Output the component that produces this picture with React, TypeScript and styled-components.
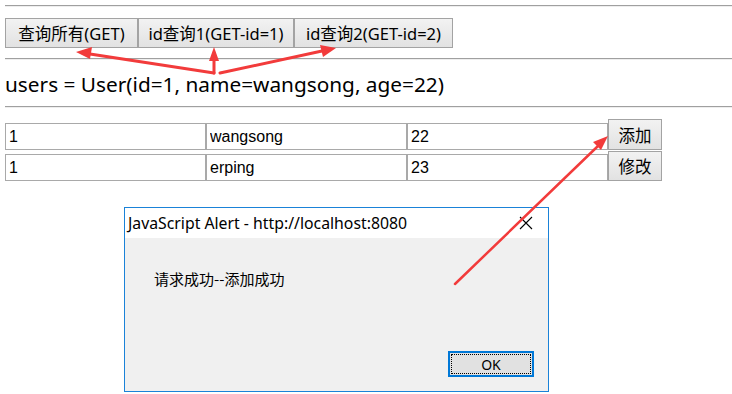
import styled, { createGlobalStyle } from "styled-components";

const GlobalStyle = createGlobalStyle`
  html, body {
    margin: 0;
    padding: 0;
    background: #ffffff;
  }
  body {
    font-family: "Noto Sans", "Noto Sans CJK SC", sans-serif;
    color: #000000;
  }
`;

const queryButtons = [
  { label: "查询所有(GET)", width: 133 },
  { label: "id查询1(GET-id=1)", width: 156 },
  { label: "id查询2(GET-id=2)", width: 159 },
];

const rows = [
  { id: "1", name: "wangsong", age: "22", action: "添加" },
  { id: "1", name: "erping", age: "23", action: "修改" },
];

function Arrows() {
  return (
    <Overlay width="732" height="394" viewBox="0 0 732 394">
      <g fill="#f23b3b" stroke="#f23b3b" strokeLinecap="round">
        <line x1="214" y1="73" x2="90" y2="54" strokeWidth="3" />
        <polygon points="76,52 92,47 90,59" stroke="none" />
        <line x1="214" y1="73" x2="214" y2="60" strokeWidth="3" />
        <polygon points="214,47 209,61 219,61" stroke="none" />
        <line x1="220" y1="73" x2="322" y2="51" strokeWidth="3" />
        <polygon points="336,48 320,45 323,57" stroke="none" />
        <line x1="455" y1="284" x2="598" y2="146" strokeWidth="2.5" />
        <polygon points="608,136 593,142 601,150" stroke="none" />
      </g>
    </Overlay>
  );
}

function AlertDialog() {
  return (
    <Dialog>
      <TitleBar>
        <Title>JavaScript Alert - http://localhost:8080</Title>
        <CloseIcon width="14" height="14" viewBox="0 0 14 14">
          <path d="M1 1 L13 13 M13 1 L1 13" stroke="#000" strokeWidth="1.1" />
        </CloseIcon>
      </TitleBar>
      <DialogBody>
        <Message>请求成功--添加成功</Message>
        <ButtonBar>
          <OkButton>
            <FocusRing>OK</FocusRing>
          </OkButton>
        </ButtonBar>
      </DialogBody>
    </Dialog>
  );
}

export default function App() {
  return (
    <>
      <GlobalStyle />
      <Page>
        <Rule />
        <Toolbar>
          {queryButtons.map((b) => (
            <PlainButton key={b.label} $width={b.width}>
              {b.label}
            </PlainButton>
          ))}
        </Toolbar>
        <Rule />
        <Result>users = User(id=1, name=wangsong, age=22)</Result>
        <Rule />
        <Table>
          {rows.map((row) => (
            <Row key={row.action}>
              <Field defaultValue={row.id} />
              <Field defaultValue={row.name} />
              <Field defaultValue={row.age} />
              <RowButton $width={54} $tall={row.action === "添加"}>
                {row.action}
              </RowButton>
            </Row>
          ))}
        </Table>
        <AlertDialog />
        <Arrows />
      </Page>
    </>
  );
}

const Page = styled.div`
  position: relative;
  width: 732px;
  height: 394px;
  box-sizing: border-box;
  padding: 5px 0 0 5px;
  overflow: hidden;
`;

const Rule = styled.hr`
  margin: 0;
  height: 0;
  border: none;
  border-top: 1px solid #a0a0a0;
  border-bottom: 1px solid #eeeeee;
`;

const Toolbar = styled.div`
  display: flex;
  margin: 11px 0 10px;
`;

const PlainButton = styled.button<{ $width: number }>`
  width: ${(p) => p.$width}px;
  height: 30px;
  padding: 0;
  white-space: nowrap;
  font-family: "Noto Sans", "Noto Sans CJK SC", sans-serif;
  font-size: 16.5px;
  color: #000;
  background: linear-gradient(#f2f2f2, #e2e2e2);
  border: 1px solid #a3a3a3;
  border-radius: 0;
  cursor: pointer;
`;

const Result = styled.div`
  margin: 11px 0 9px;
  font-family: "Noto Sans", "Noto Sans CJK SC", sans-serif;
  font-size: 20.8px;
  line-height: 26px;
`;

const Table = styled.div`
  display: flex;
  flex-direction: column;
  gap: 1px;
  margin-top: 11px;
`;

const Row = styled.div`
  display: flex;
  align-items: flex-end;
`;

const Field = styled.input`
  width: 201px;
  height: 27px;
  box-sizing: border-box;
  margin: 0;
  padding: 0 3px;
  border: 1px solid #a9a9a9;
  font-family: "Liberation Sans", Arial, sans-serif;
  font-size: 16px;
  color: #000;
  outline: none;
`;

const RowButton = styled(PlainButton)<{ $tall: boolean }>`
  height: ${(p) => (p.$tall ? "31px" : "30px")};
  font-family: "Noto Sans CJK SC", sans-serif;
`;

const Dialog = styled.div`
  position: absolute;
  left: 124px;
  top: 207px;
  width: 425px;
  height: 185px;
  box-sizing: border-box;
  border: 1px solid #1a82d8;
  background: #f0f0f0;
  display: flex;
  flex-direction: column;
`;

const TitleBar = styled.div`
  height: 30px;
  background: #ffffff;
  display: flex;
  align-items: center;
  justify-content: space-between;
  padding: 0 15px 0 3px;
`;

const Title = styled.span`
  font-family: "Noto Sans", sans-serif;
  font-size: 15.8px;
  color: #000;
`;

const CloseIcon = styled.svg`
  display: block;
`;

const DialogBody = styled.div`
  flex: 1;
  display: flex;
  flex-direction: column;
  justify-content: space-between;
  padding: 31px 14px 14px 29px;
`;

const Message = styled.div`
  font-family: "Noto Sans CJK SC", sans-serif;
  font-size: 15px;
  line-height: 20px;
`;

const ButtonBar = styled.div`
  display: flex;
  justify-content: flex-end;
`;

const OkButton = styled.button`
  width: 86px;
  height: 26px;
  padding: 1px;
  box-sizing: border-box;
  border: 2px solid #0078d7;
  background: #e1e1e1;
  font-family: "Noto Sans", sans-serif;
  font-size: 14px;
  color: #000;
`;

const FocusRing = styled.span`
  display: flex;
  align-items: center;
  justify-content: center;
  height: 100%;
  border: 1px dotted #000;
  box-sizing: border-box;
`;

const Overlay = styled.svg`
  position: absolute;
  left: 0;
  top: 0;
  pointer-events: none;
`;
